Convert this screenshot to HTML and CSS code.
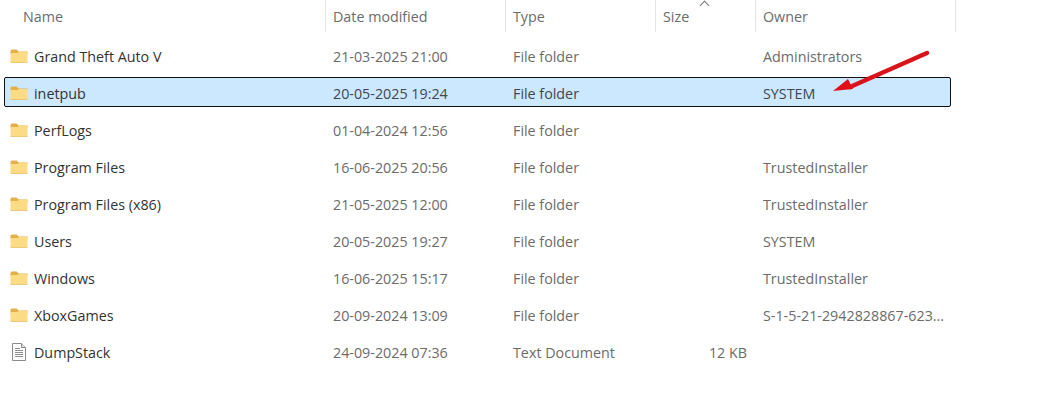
FILE: index.html
```html
<!DOCTYPE html>
<html lang="en">
  <head>
    <meta charset="UTF-8" />
    <title>This PC - Local Disk (C:)</title>
    <link rel="stylesheet" href="styles.css">
  </head>
  <body>
    <svg width="0" height="0" class="defs">
      <symbol id="folder" viewBox="0 0 18 14">
        <path d="M0.5 2.2 Q0.5 0.5 2 0.5 H6.6 L8.6 2.4 H17.5 V5 H0.5 Z" fill="#e3b04a" />
        <path d="M0.5 4 H7.6 L9 3 H17.5 V13.5 H0.5 Z" fill="#fbdc85" />
        <path d="M0.5 13 H17.5 V13.8 H0.5 Z" fill="#e8c06a" />
      </symbol>
      <symbol id="textfile" viewBox="0 0 14 18">
        <path d="M0.5 0.5 H9.5 L13.5 4.5 V17.5 H0.5 Z" fill="#fff" stroke="#8a8a8a" />
        <path d="M9.5 0.5 V4.5 H13.5" fill="#e4e4e4" stroke="#8a8a8a" />
        <path d="M3 5.5 H8 M3 7.5 H11 M3 9.5 H11 M3 11.5 H11 M3 13.5 H11" stroke="#8f8f8f" />
      </symbol>
    </svg>

    <div class="list">
      <div class="list-header">
        <div class="col-head col-head-name">Name</div>
        <div class="col-head col-head-date">Date modified</div>
        <div class="col-head col-head-type">Type</div>
        <div class="col-head col-head-size">Size<span class="sort-caret"></span></div>
        <div class="col-head col-head-owner">Owner</div>
      </div>

      <div class="rows">
        <div class="row">
          <div class="cell-name"><svg class="icon"><use href="#folder" /></svg>Grand Theft Auto V</div>
          <div>21-03-2025 21:00</div>
          <div>File folder</div>
          <div class="cell-size"></div>
          <div>Administrators</div>
        </div>
        <div class="row row-selected">
          <div class="cell-name"><svg class="icon"><use href="#folder" /></svg>inetpub</div>
          <div>20-05-2025 19:24</div>
          <div>File folder</div>
          <div class="cell-size"></div>
          <div>SYSTEM</div>
        </div>
        <div class="row">
          <div class="cell-name"><svg class="icon"><use href="#folder" /></svg>PerfLogs</div>
          <div>01-04-2024 12:56</div>
          <div>File folder</div>
          <div class="cell-size"></div>
          <div></div>
        </div>
        <div class="row">
          <div class="cell-name"><svg class="icon"><use href="#folder" /></svg>Program Files</div>
          <div>16-06-2025 20:56</div>
          <div>File folder</div>
          <div class="cell-size"></div>
          <div>TrustedInstaller</div>
        </div>
        <div class="row">
          <div class="cell-name"><svg class="icon"><use href="#folder" /></svg>Program Files (x86)</div>
          <div>21-05-2025 12:00</div>
          <div>File folder</div>
          <div class="cell-size"></div>
          <div>TrustedInstaller</div>
        </div>
        <div class="row">
          <div class="cell-name"><svg class="icon"><use href="#folder" /></svg>Users</div>
          <div>20-05-2025 19:27</div>
          <div>File folder</div>
          <div class="cell-size"></div>
          <div>SYSTEM</div>
        </div>
        <div class="row">
          <div class="cell-name"><svg class="icon"><use href="#folder" /></svg>Windows</div>
          <div>16-06-2025 15:17</div>
          <div>File folder</div>
          <div class="cell-size"></div>
          <div>TrustedInstaller</div>
        </div>
        <div class="row">
          <div class="cell-name"><svg class="icon"><use href="#folder" /></svg>XboxGames</div>
          <div>20-09-2024 13:09</div>
          <div>File folder</div>
          <div class="cell-size"></div>
          <div>S-1-5-21-2942828867-623...</div>
        </div>
        <div class="row">
          <div class="cell-name"><svg class="icon icon-file"><use href="#textfile" /></svg>DumpStack</div>
          <div>24-09-2024 07:36</div>
          <div>Text Document</div>
          <div class="cell-size">12 KB</div>
          <div></div>
        </div>
      </div>
    </div>

    <!-- red annotation arrow -->
    <svg class="arrow" width="110" height="50" viewBox="0 0 110 50">
      <path d="M97 3 L20 37" stroke="#d8131b" stroke-width="4.5" stroke-linecap="round" fill="none" />
      <path d="M3 41 L18 29 L23 39 Z" fill="#e0101a" />
    </svg>
  </body>
</html>
```

FILE: styles.css
```css
* {
  margin: 0;
  padding: 0;
  box-sizing: border-box;
}

body {
  position: relative;
  height: 408px;
  overflow: hidden;
  background: #fff;
  font-family: "Open Sans", "Noto Sans", sans-serif;
  font-size: 14.3px;
  color: #6b6b6b;
}

.defs {
  position: absolute;
}

.list-header {
  display: flex;
  height: 32px;
  align-items: stretch;
}

.col-head {
  position: relative;
  padding: 7px 0 0 7px;
  border-right: 1px solid #e5e5e5;
  line-height: 19px;
}

.col-head-name {
  width: 326px;
  padding-left: 23px;
}

.col-head-date {
  width: 180px;
}

.col-head-type {
  width: 150px;
}

.col-head-size {
  width: 100px;
}

.col-head-owner {
  width: 200px;
}

.sort-caret {
  position: absolute;
  top: 2px;
  left: 45px;
  width: 7px;
  height: 7px;
  border-top: 1px solid #777;
  border-left: 1px solid #777;
  transform: rotate(45deg);
}

.rows {
  display: flex;
  flex-direction: column;
  gap: 7px;
  margin: 9px 0 0 4px;
  width: 947px;
}

.row {
  display: grid;
  grid-template-columns: 328px 180px 150px 84px 1fr;
  height: 30px;
  align-items: center;
  border: 1px solid transparent;
  border-radius: 2px;
  line-height: 19px;
}

.row > :last-child {
  padding-left: 16px;
  white-space: nowrap;
}

.row-selected {
  margin: -1px 0 1px;
  padding-top: 2px;
  background: #cce8ff;
  border-color: #111;
  color: #3f4650;
}

.cell-name {
  display: flex;
  align-items: center;
  gap: 6px;
  padding-left: 5px;
  color: #333;
}

.cell-size {
  text-align: right;
}

.icon {
  width: 18px;
  height: 14px;
  flex: none;
}

.icon-file {
  height: 18px;
}

.arrow {
  position: absolute;
  top: 50px;
  left: 830px;
}
```
